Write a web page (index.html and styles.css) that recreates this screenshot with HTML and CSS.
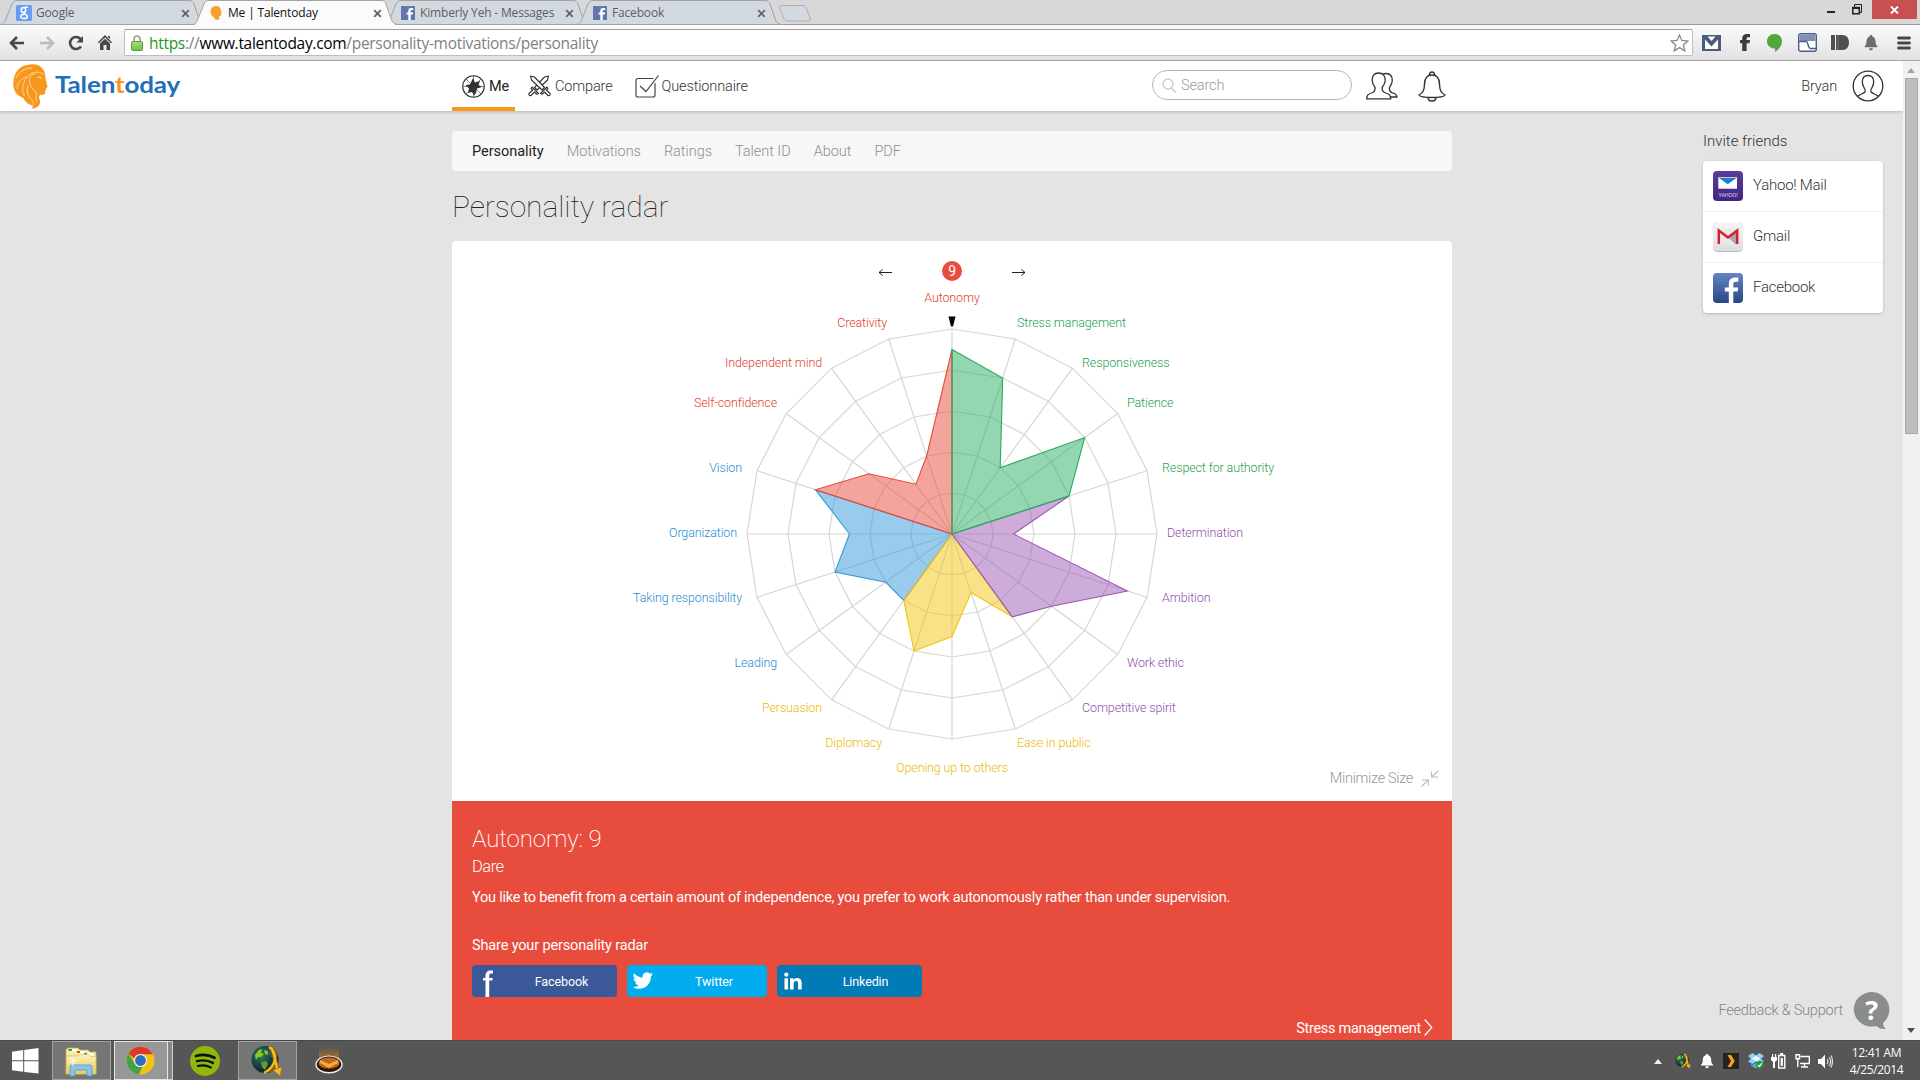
FILE: index.html
```html
<!DOCTYPE html>
<html lang="en">
<head>
<meta charset="utf-8">
<title>Me | Talentoday</title>
<link rel="stylesheet" href="styles.css">
</head>
<body>
<svg width="0" height="0" class="defs">
  <defs>
    <linearGradient id="folder" x1="0" y1="0" x2="0" y2="1"><stop offset="0" stop-color="#fdf3b8"/><stop offset="1" stop-color="#e3c766"/></linearGradient>
    <linearGradient id="fbgrad" x1="0" y1="0" x2="0" y2="1"><stop offset="0" stop-color="#6484c4"/><stop offset="1" stop-color="#274784"/></linearGradient>
    <linearGradient id="yahoograd" x1="0" y1="0" x2="0" y2="1"><stop offset="0" stop-color="#5c3c98"/><stop offset="1" stop-color="#432484"/></linearGradient>
    <linearGradient id="gmailgrad" x1="0" y1="0" x2="0" y2="1"><stop offset="0" stop-color="#f7f7f7"/><stop offset="1" stop-color="#dedede"/></linearGradient>
    <linearGradient id="lock" x1="0" y1="0" x2="0" y2="1"><stop offset="0" stop-color="#a6e07a"/><stop offset="1" stop-color="#6cbf4a"/></linearGradient>
    <linearGradient id="gold" x1="0" y1="0" x2="0" y2="1"><stop offset="0" stop-color="#b87318" stop-opacity="0"/><stop offset="1" stop-color="#c98126"/></linearGradient>
    <radialGradient id="earth" cx=".35" cy=".35" r=".7"><stop offset="0" stop-color="#2f7a62"/><stop offset=".6" stop-color="#163c46"/><stop offset="1" stop-color="#0b1c26"/></radialGradient>
    <symbol id="x" viewBox="0 0 9 9"><path d="M1.2 1.2L7.8 7.8M7.8 1.2L1.2 7.8" stroke="currentColor" stroke-width="1.9"/></symbol>
    <symbol id="tabshape" viewBox="0 0 206 25"><path d="M0 24.5C4 24 4.500 22.500 5.500 20L12 4C13 1.500 14 .5 17 .5H189C192 .5 193 1.500 194 4L199.500 20C200.500 22.500 202 24 206 24.500Z"/></symbol>
    <symbol id="fbfav" viewBox="0 0 14 14"><path fill="#6377ad" d="M0 0h14v14H0z"/><path fill="#fff" d="M7.300 14V8.600H5.600V6.400h1.700V5c0-2 1-3 2.900-3h2v2h-1.400c-.8 0-1.100.3-1.100 1.100v1.300h2.400l-.3 2.200H9.700V14z"/></symbol>
    <symbol id="lion" viewBox="0 0 36 45">
      <path fill="#f7981d" d="M17 .5C23 -.5 28 1.500 30.500 6c2 3 1.800 6 2 9l2.200 8-2 1.200.5 2-1.300 1 .3 2.500c-2 1.600-5 .2-6 2.300-.6 2.500 1.300 4.500.8 7-.5 2.800-3.500 5.300-7.600 5.800.3-1.500-.2-2.800-1-3.800-4-1-6.500-3.500-8-7C4 32 0 27 .3 19 .5 8 7 1 17 .5z"/>
      <g fill="none" stroke="#fff" stroke-width=".75" opacity=".75"><path d="M31 11c-3-2.500-6-3.500-10-2.500-6 1.500-8 5.500-10 10-2 5-2 9 .5 13.500M22 9.500c-4 1-6 3.500-5.500 8 .6 5 3 7 6 10.500 3 3.500-1 6 1 10"/><path d="M14 13C8 14 4 19 4 25M15 22c-2 6 0 10 4 14 2 2.500 1.500 4.500.5 7M3 14C6 8 12 4 19 4"/><path stroke-width="1.200" d="M24.500 13c2 0 3 .5 4 1.500"/></g>
    </symbol>
    <symbol id="globe" viewBox="0 0 32 32">
      <circle cx="14" cy="14.500" r="13.500" fill="url(#earth)"/>
      <path fill="#8ecc1c" d="M4 10l4-5 3-1-1 4 3 1-3 3-3 0-2 3zM13 5l4 1 0 4-3-1z"/>
      <path fill="#5f9f24" d="M10 17l5-1 2 3-3 6-3-3z"/>
      <path fill="#2e5a50" d="M16 4l6 3 2 7-6-3z"/>
      <path fill="none" stroke="#8a5d07" stroke-width="4" d="M19 2C27 8 26 21 17 27M20 2c4 8 5 17 6 22"/>
      <path fill="none" stroke="#f5ba22" stroke-width="2.400" d="M18 2C27 8 26 21 13 28M20 2c4 8 5 17 6 22"/>
      <path fill="#f5ba22" stroke="#a66e08" stroke-width=".6" d="M22 25l9-3-2 9z"/>
    </symbol>
    <symbol id="lb" viewBox="0 0 14 17"><path fill="currentColor" d="M7 0c1 0 1.500.6 1.500 1.500C11 2.300 11.700 4.500 11.800 7c.1 3 .7 4 2.200 5.200V13H0v-.8C1.500 11 2.100 10 2.200 7c.1-2.500.8-4.700 3.300-5.500C5.500.6 6 0 7 0zM5 14h4c0 1.300-.8 2.200-2 2.200S5 15.300 5 14z"/></symbol>
  </defs>
</svg>

<div class="tabstrip">
  <div class="tab tab-back"><svg class="tab-bg"><use href="#tabshape"/></svg>
    <svg class="fav" width="16" height="16" viewBox="0 0 16 16"><rect width="16" height="16" rx="1.500" fill="#6a9cf0"/><g fill="none" stroke="#fff" stroke-width="1.500"><ellipse cx="7.500" cy="4.900" rx="2.200" ry="2.500"/><path d="M8.500 2.300H12M8 7.500c-1 1.500 3.300 1.600 3.300 3.900 0 2.900-6.600 2.900-6.600.2 0-2 2.500-2.300 4-2.300"/></g></svg>
    <span class="tab-title">Google</span><svg class="tab-x"><use href="#x"/></svg></div>
  <div class="tab tab-active"><svg class="tab-bg"><use href="#tabshape"/></svg>
    <svg class="fav" width="16" height="16" viewBox="0 0 16 16"><path fill="#f7a12d" d="M7 1c4-.6 6 1.600 6 5l.7 2.500-.9.8V11H11l.5 3-2.500 1C7 15 7 13 5.500 12 3.500 11 2.500 9 2.600 6.600 2.700 3.500 4 1.500 7 1z"/></svg>
    <span class="tab-title">Me | Talentoday</span><svg class="tab-x"><use href="#x"/></svg></div>
  <div class="tab tab-back"><svg class="tab-bg"><use href="#tabshape"/></svg>
    <svg class="fav" width="14" height="14"><use href="#fbfav"/></svg>
    <span class="tab-title">Kimberly Yeh - Messages</span><svg class="tab-x"><use href="#x"/></svg></div>
  <div class="tab tab-back"><svg class="tab-bg"><use href="#tabshape"/></svg>
    <svg class="fav" width="14" height="14"><use href="#fbfav"/></svg>
    <span class="tab-title">Facebook</span><svg class="tab-x"><use href="#x"/></svg></div>
  <svg class="newtab" width="33" height="17" viewBox="0 0 33 17"><path d="M4 .5H25c1.500 0 2.500.5 3 2L32 13c.6 2-.2 3-2 3H9c-1.800 0-2.500-.7-3-2L1.500 3C1 1.500 2 .5 4 .5z" fill="#d3d9e0" stroke="#aeaeae"/></svg>
  <div class="winctl">
    <span class="win-min"></span>
    <svg width="11" height="11" viewBox="0 0 11 11"><path fill="none" stroke="#222" d="M2.500 3V.5h7v8H8"/><path fill="none" stroke="#222" stroke-width="1.500" d="M.8 3.500h6.500v6.300H.8z"/><path stroke="#222" d="M1 4.500h6"/></svg>
    <span class="win-close"><svg width="9" height="8" viewBox="0 0 9 8"><path d="M1 .5l7 7M8 .5l-7 7" stroke="#fff" stroke-width="1.800"/></svg></span>
  </div>
</div>

<div class="toolbar">
  <svg class="tb-back" width="16" height="14" viewBox="0 0 16 14"><path d="M15 7H2M8 1L2 7l6 6" fill="none" stroke="#484848" stroke-width="2.600"/></svg>
  <svg class="tb-fwd" width="16" height="14" viewBox="0 0 16 14"><path d="M1 7h13M8 1l6 6-6 6" fill="none" stroke="#bdbdbd" stroke-width="2.600"/></svg>
  <svg class="tb-reload" width="16" height="16" viewBox="0 0 16 16"><path d="M13 11.500A6 6 0 1 1 12.500 4" fill="none" stroke="#484848" stroke-width="2.600"/><path d="M15 1v6.500H8.500z" fill="#484848"/></svg>
  <svg class="tb-home" width="14" height="15" viewBox="0 0 14 15"><path fill="#484848" d="M7 0l7 7.200-1 1L7 2.500 1 8.200l-1-1zM10 1h2v3l-2-2zM2 8.500l5-4.700 5 4.700V15H8.500v-5h-3v5H2z"/></svg>
  <div class="omnibox">
    <svg width="12" height="16" viewBox="0 0 12 16"><path d="M3 7V4a3 3 0 0 1 6 0v3" fill="none" stroke="#9a9a9a" stroke-width="1.600"/><rect x=".5" y="6.500" width="11" height="9" rx="1" fill="url(#lock)" stroke="#579b3a"/></svg>
    <span class="url"><i class="u-s">https</i><i class="u-g">://</i>www.talentoday.com<i class="u-g">/personality-motivations/personality</i></span>
    <svg width="19" height="18" viewBox="0 0 19 18"><path d="M9.500 1l2.400 5.500 6 .5-4.600 3.900 1.500 6-5.300-3.300-5.300 3.300 1.500-6L1.100 7l6-.5z" fill="#fff" stroke="#8b8b8b" stroke-width="1.300"/></svg>
  </div>
  <div class="exts">
    <svg class="e-mail" width="19" height="16" viewBox="0 0 19 16"><path fill="#4c5c7c" d="M0 0h19v16H0z"/><path fill="#fff" d="M5.500 1.500h8L9.500 6zM3 4.500l6.500 7 6.500-7V14H3z"/></svg>
    <svg class="e-f" width="10" height="17" viewBox="0 0 10 17"><path fill="#3c3c3c" d="M2.200 17V9.200H0V6h2.200V4.700C2.200 1.500 4 0 6.800 0H10v3.200H8.200C7 3.200 6.600 3.700 6.600 4.800V6H10l-.5 3.200H6.600V17z"/></svg>
    <svg class="e-talk" width="15" height="18" viewBox="0 0 15 18"><path fill="#4fa83d" d="M7.500 0C11.800 0 15 3 15 7.200c0 4.300-3 8.300-7 10.800v-3.500C3.500 14.500 0 11.500 0 7.200 0 3 3.200 0 7.500 0z"/></svg>
    <svg class="e-cal" width="19" height="19" viewBox="0 0 19 19"><rect x=".7" y=".7" width="17.600" height="17.600" rx="2" fill="#fff" stroke="#4b5d84" stroke-width="1.400"/><path fill="#8090b8" d="M1.500 1.500h16V8h-16z"/><path d="M1 8.500h7.500c1.500 0 1 5.500 3.500 7h6" fill="none" stroke="#4b5d84" stroke-width="1.400"/></svg>
    <svg class="e-id" width="18" height="15" viewBox="0 0 18 15"><path fill="#4f4f4f" d="M0 0h4v15H0zM5 0h6.500c4 0 6.500 3 6.500 7.500S15.500 15 11.500 15H5z"/><path stroke="#707070" d="M7 0v15"/></svg>
    <svg class="e-bell" width="14" height="16" viewBox="0 0 14 17" color="#6d6d6d"><use href="#lb"/></svg>
    <svg class="e-menu" width="14" height="14" viewBox="0 0 14 14"><path d="M1.500 2h11M1.500 7h11M1.500 12h11" stroke="#484848" stroke-width="2.800" stroke-linecap="round"/></svg>
  </div>
</div>

<div class="viewport">
  <div class="page">
    <header class="header">
      <div class="brand">
        <svg width="36" height="45"><use href="#lion"/></svg>
        <svg class="wordmark" width="130" height="34"><text x="0" y="24" textLength="125" lengthAdjust="spacingAndGlyphs">Talen<tspan class="t">t</tspan>oday</text></svg>
      </div>
      <nav class="topnav">
        <a class="on"><svg width="23" height="23" viewBox="0 0 23 23"><g fill="none" stroke="#333"><circle cx="11.500" cy="11.500" r="10.800" stroke-width="1.100"/><path stroke-width=".6" d="M11.500 1v21M1 11.500h21M4 4l15 15M19 4L4 19"/></g><path fill="#333" d="M11 3l2 4.500L18 6l-1.500 4 3.500 2-5 1.500-1 4.500-2 2.500L10 17l-4 1 1-4.500L3.500 10l4.500-.5z"/></svg>Me</a>
        <a><svg width="23" height="22" viewBox="0 0 23 22"><g fill="#fff" stroke="#333" stroke-width="1.100" stroke-linejoin="round"><path d="M20.500 1l-4 1L6.500 12.500 9 15 19.500 5z"/><path d="M4 12l6.500 6.500-1.700.8L6.500 17 3 20.500a1.500 1.500 0 0 1-2-2L4.700 15 3 13.500z"/><path d="M2.500 1l4 1L16.500 12.500 14 15 3.500 5z"/><path d="M19 12l-6.500 6.500 1.700.8 2.300-2.300 3.500 3.500a1.500 1.500 0 0 0 2-2L18.300 15l1.700-1.500z"/></g></svg>Compare</a>
        <a><svg width="24" height="23" viewBox="0 0 24 23"><g fill="none" stroke="#444" stroke-width="1.200"><path d="M18.500 3.500H3a2 2 0 0 0-2 2V20a2 2 0 0 0 2 2h15a2 2 0 0 0 2-2V8"/><path d="M5 11l6 5.500L23.500.5"/></g></svg>Questionnaire</a>
      </nav>
      <div class="search"><svg width="15" height="15" viewBox="0 0 15 15"><circle cx="6" cy="6" r="5" fill="none" stroke="#ccc" stroke-width="1.300"/><path d="M9.500 10l4.500 4.500" stroke="#ccc" stroke-width="1.500"/></svg>Search</div>
      <svg class="h-people" width="32" height="28" viewBox="0 0 32 28"><g fill="#fff" stroke="#333" stroke-width="1.300"><path d="M15 4c1-2 3-2.500 5-2.500 4.500 0 6.500 3 6.300 7-.1 3-1.500 5-2.800 7-.4 3 .5 4.500 3 5.300 3 .7 4.200 1.500 4.500 4.200h-8"/><path d="M12.500 1C8 1 6 4 6.200 8.500c.2 3 1.300 5 2.800 7 .4 3-.5 4.500-3.500 5.500C2 22 1 23 .7 26.800h24c-.3-3.800-1.500-4.800-5-5.800-3-1-3.900-2.500-3.500-5.500 1.500-2 2.800-4 3-7C19.400 4 17 1 12.500 1z"/></g></svg>
      <svg class="h-bell" width="28" height="31" viewBox="0 0 28 31"><g fill="#fff" stroke="#333" stroke-width="1.400"><path d="M10 26.500c0 2.300 1.700 3.500 4 3.500s4-1.200 4-3.500M11.500 4c0-2 .8-3 2.500-3s2.500 1 2.500 3"/><path d="M14 4c-5 0-7.300 3.500-7.500 9-.2 6-1 8.500-5.500 11 1 2 7 2.500 13 2.500S26 26 27 24c-4.500-2.500-5.300-5-5.500-11-.2-5.500-2.500-9-7.500-9z"/></g></svg>
      <span class="user">Bryan</span>
      <svg class="h-avatar" width="32" height="32" viewBox="0 0 32 32"><g fill="none" stroke="#333" stroke-width="1.300"><circle cx="16" cy="16" r="14.800"/><path d="M5.500 26.500c2-2.500 6-2.500 7.500-4.500.7-1.500 0-3-1-4.500-1-1.500-1.800-3.500-1.700-6C10.500 7.500 12.500 5.500 16 5.500s5.500 2 5.700 6c.1 2.500-.7 4.500-1.700 6s-1.700 3-1 4.500c1.500 2 5.500 2 7.500 4.500"/></g></svg>
    </header>

    <div class="content">
      <main class="main">
        <nav class="subnav"><a class="on">Personality</a><a>Motivations</a><a>Ratings</a><a>Talent ID</a><a>About</a><a>PDF</a></nav>
        <h1>Personality radar</h1>
        <section class="radar-card">
          <svg id="radar" width="1000" height="560" viewBox="452 241 1000 560"></svg>
          <div class="minimize"><span>Minimize Size</span><svg width="18" height="17" viewBox="0 0 18 17"><path fill="none" stroke="#bbb" stroke-width="1.100" d="M17.500.5l-7 6.500M10.500 1.500V7H17M.5 16.500l7-6.500M1 10h6.500v5.500"/></svg></div>
        </section>
        <section class="detail">
          <h2>Autonomy: 9</h2>
          <h3>Dare</h3>
          <p class="desc">You like to benefit from a certain amount of independence, you prefer to work autonomously rather than under supervision.</p>
          <p class="share-title">Share your personality radar</p>
          <div class="share">
            <a class="fb"><svg width="30" height="32" viewBox="0 0 30 32"><path fill="#fff" d="M13.500 32V15.500H11V13h2.500v-2C13.500 7.500 15.500 5.500 18.500 5.500H21v3h-1.500c-1.800 0-2.300.7-2.300 2.300V13h3.600l-.4 2.500h-3.200V32z"/></svg><span>Facebook</span></a>
            <a class="tw"><svg width="30" height="32" viewBox="0 0 30 32"><path transform="translate(5.800 5.500) scale(.84)" fill="#fff" d="M23.950 4.570a10 10 0 0 1-2.820.78 4.960 4.960 0 0 0 2.160-2.730c-.95.560-2 .96-3.130 1.190a4.920 4.920 0 0 0-8.380 4.480C7.690 8.090 4.070 6.130 1.640 3.160a4.920 4.920 0 0 0 1.520 6.570 4.900 4.900 0 0 1-2.230-.610v.06c0 2.380 1.700 4.370 3.950 4.820a5 5 0 0 1-2.210.09 4.940 4.940 0 0 0 4.600 3.420A9.870 9.870 0 0 1 0 19.540a14 14 0 0 0 7.550 2.210c9.050 0 14-7.500 14-13.980l-.02-.64a9.900 9.900 0 0 0 2.420-2.560z"/></svg><span>Twitter</span></a>
            <a class="li"><svg width="30" height="32" viewBox="0 0 30 32"><g fill="#fff"><circle cx="9.300" cy="9.700" r="2.100"/><path d="M7.500 13.300h3.600v11.200H7.500zM13 13.300h3.400v1.600c.7-1.200 2-1.900 3.600-1.900 3.600 0 4.700 2.200 4.700 5.600v5.900h-3.600v-5.400c0-1.700-.3-3-2-3s-2.500 1.200-2.500 3v5.400H13z"/></g></svg><span>Linkedin</span></a>
          </div>
          <a class="next"><span>Stress management</span><svg width="9" height="17" viewBox="0 0 9 17"><path d="M.7.5L7.800 8.500.7 16.500" fill="none" stroke="#fff" stroke-width="1.200"/></svg></a>
        </section>
      </main>
      <aside class="side">
        <h4>Invite friends</h4>
        <div class="invite">
          <a><svg width="30" height="30" viewBox="0 0 30 30"><rect width="30" height="30" rx="4" fill="url(#yahoograd)"/><path fill="#fff" d="M5.300 6.300H24v11.400H5.300z"/><path fill="#1a82c8" d="M6 7h17.500l-8.700 6.300z"/><text x="5.500" y="26.200" class="yh" textLength="19" lengthAdjust="spacingAndGlyphs">YAHOO!</text></svg><span>Yahoo! Mail</span></a>
          <a><svg width="30" height="30" viewBox="0 0 30 30"><rect width="30" height="30" rx="4.500" fill="#bbb"/><rect width="30" height="29" rx="4.500" fill="url(#gmailgrad)"/><path fill="#e9e9e9" d="M5 7h20v15H5z"/><path fill="#a5a9ab" d="M15 15l10-8v15h-3z"/><path d="M5.800 22V8.500L15 15.500l9.200-7V22" fill="none" stroke="#d9202a" stroke-width="2.500"/></svg><span>Gmail</span></a>
          <a><svg width="30" height="30" viewBox="0 0 30 30"><rect width="30" height="30" rx="4" fill="url(#fbgrad)"/><path fill="#fff" d="M15.800 30V18.600h-4v-4.200h4v-3.200c0-4.500 2.400-6.700 6.300-6.700h3.200v4.200h-2.400c-2 0-2.600.9-2.600 2.700v3h4.900l-.6 4.200h-4.300V30z"/></svg><span>Facebook</span></a>
        </div>
      </aside>
    </div>
    <div class="feedback"><span>Feedback &amp; Support</span><svg width="38" height="38" viewBox="0 0 38 38"><path fill="#8b8c8c" d="M18.500 0a18 17.300 0 1 0 5 34c2 2 5.500 3.800 9.500 2.800-2-1-3-3-2.800-6A17.500 17.500 0 0 0 18.500 0z"/><text x="18.600" y="27.500" text-anchor="middle" class="qm">?</text></svg></div>
  </div>
  <div class="scrollbar"><i class="sb-up"></i><i class="sb-thumb"></i><i class="sb-down"></i></div>
</div>

<div class="taskbar">
  <div class="tk-start"><svg width="27" height="26" viewBox="0 0 27 26"><path fill="#fff" d="M0 3.700l11.200-1.600V12.300H0zM12.200 2L26.500 0v12.300H12.200zM0 13.300h11.200V23.800L0 22.200zM12.200 13.300h14.300V25.500L12.200 24z"/></svg></div>
  <div class="tk-btn tk-explorer"><svg width="34" height="32" viewBox="0 0 34 32"><path fill="url(#folder)" stroke="#c9a94c" stroke-width=".7" d="M2 29V4.500L4 3h10l2 2h8l2 2h6v22z"/><path fill="#fff" d="M6 4h6v2.500H6zM14 6h7v2.500h-7zM22 8h7v2.500h-7z"/><path fill="#1eae38" d="M4.500 4H8v2H4.500z"/><path fill="#d24a28" d="M13 6h3v2h-3z"/><path fill="#2b83d6" d="M20 8h3v2h-3z"/><path fill="url(#folder)" stroke="#d7bc62" stroke-width=".6" d="M2.500 11H14l2-1.500h9l2 2h5V29h-30z"/><path fill="#8cc4e4" stroke="#4d9cc8" stroke-width=".8" d="M6 31V22c0-1.500 1-2 2-2h18c1.500 0 2 .8 2 2v9h-5v-6H11v6z"/><path stroke="#fff" stroke-width=".9" d="M5 18l8-3M9 12v9M6 13l6 6"/></svg></div>
  <div class="tk-btn tk-chrome"><svg width="29" height="29" viewBox="0 0 30 30"><circle cx="15" cy="15" r="14.500" fill="#f4c20d"/><path fill="#d93a2f" d="M2.500 7.700A14.500 14.500 0 0 1 27.800 8.500H15a6.500 6.500 0 0 0-6.200 4.500z"/><path fill="#45a14c" d="M2.500 7.700L9.300 18.500a6.500 6.500 0 0 0 7.700 2.700L13.300 29.400A14.500 14.500 0 0 1 2.500 7.700z"/><circle cx="15" cy="15" r="6.800" fill="#f1f1f1"/><circle cx="15" cy="15" r="5.600" fill="#2f6fbe"/></svg></div>
  <div class="tk-stack"></div>
  <div class="tk-icon tk-spotify"><svg width="30" height="30" viewBox="0 0 30 30"><circle cx="15" cy="15" r="15" fill="#8fb70c"/><g fill="none" stroke="#111" stroke-linecap="round"><path stroke-width="2.800" d="M6 10c6-1.800 13-1.300 18.500 1.800"/><path stroke-width="2.400" d="M7 15.200c5.500-1.500 11-1 16 1.700"/><path stroke-width="2" d="M7.800 20c4.700-1.200 9-.7 13.200 1.500"/></g></svg></div>
  <div class="tk-btn tk-globe"><svg width="32" height="32"><use href="#globe"/></svg></div>
  <div class="tk-icon tk-disc"><svg width="28" height="27" viewBox="0 0 28 27"><path fill="url(#gold)" d="M4 0h20v12H4z" opacity=".7"/><ellipse cx="14" cy="17.500" rx="13" ry="8.300" fill="#2b1605" stroke="#eee" stroke-width="1.400"/><ellipse cx="14" cy="16" rx="11" ry="6" fill="#b9691c" stroke="#40230a"/><path fill="#f7a944" d="M5 13l9 4 9-4v3l-9 5-9-5z"/></svg></div>
  <div class="tray">
    <svg class="y-up" width="8" height="5" viewBox="0 0 8 5"><path fill="#eef" d="M4 0l4 5H0z"/></svg>
    <svg class="y-globe" width="16" height="16"><use href="#globe"/></svg>
    <svg class="y-bell" width="14" height="15" viewBox="0 0 14 17" color="#fff"><use href="#lb"/></svg>
    <svg class="y-plex" width="16" height="16" viewBox="0 0 16 16"><path fill="#252220" d="M0 0h16v16H0z"/><path fill="#f9a11b" d="M4.500 2H8l3.800 6L8 14H4.500l3.500-6z"/></svg>
    <svg class="y-drop" width="16" height="16" viewBox="0 0 16 16"><path fill="#8fd0fb" d="M4.500 0L8 2.500 11.500 0 16 3l-3 2.700L16 8.500 11.500 11 8 8.500 4.500 11 0 8.500l3-2.800L0 3z"/><path fill="#e8f6ff" d="M8 2.800l4.500 2.900L8 8.300 3.500 5.700z"/><path fill="#5aa9e6" d="M3 11l1.500 1L8 9.500l3.500 2.500 1.500-1v1.500L8 15.500l-5-3z"/><circle cx="11.800" cy="11.800" r="3.800" fill="#22983a"/><path d="M10 12l1.500 1.500 2.300-3.500" stroke="#fff" fill="none" stroke-width="1.200"/></svg>
    <svg class="y-bat" width="15" height="16" viewBox="0 0 15 16"><path fill="none" stroke="#fff" stroke-width="1.400" d="M7.700 2.500h6.100v12.500H7.700z"/><path fill="#fff" d="M9.200 0h3v2h-3zM9.700 5h2.200v8H9.700zM1 1h1.200v3H1zM4 1h1.200v3H4zM0 4h6v3L4 9v6H2V9L0 7z"/></svg>
    <svg class="y-net" width="15" height="14" viewBox="0 0 15 14"><path fill="none" stroke="#fff" stroke-width="1.400" d="M5.500 2.500h8.800v7H5M9.500 9.500V13M6 13h7M1 .7h3.500v4H1zM2.800 5v8"/></svg>
    <svg class="y-snd" width="15" height="15" viewBox="0 0 15 15"><path fill="#fff" d="M0 5h3l4-4.500v14L3 10H0z"/><path fill="none" stroke="#ddd" stroke-width="1.200" d="M9 5c1.200 1.500 1.200 3.500 0 5M11 3c2 2.700 2 6.300 0 9M13 1.500c2 4 2 8 0 12"/></svg>
    <div class="clock"><span>12:41 AM</span><span>4/25/2014</span></div>
  </div>
</div>
<script src="radar.js"></script>
</body>
</html>
```
FILE: styles.css
```css
* { box-sizing: border-box; }
body {
  margin: 0;
  width: 1920px;
  height: 1080px;
  overflow: hidden;
  display: flex;
  flex-direction: column;
  font-family: Roboto, "Open Sans", sans-serif;
  font-weight: 300;
  color: #333;
}
svg { display: block; flex: none; }
.defs { position: absolute; }
i { font-style: normal; }

/* Browser tabs */
.tabstrip {
  height: 25px;
  background: #d8d8d8;
  border-bottom: 1px solid #9a9a9a;
  display: flex;
  font: 400 12px "Open Sans", sans-serif;
}
.tab {
  position: relative;
  width: 206px;
  height: 25px;
  margin-right: -14px;
  padding: 1px 0 0 16px;
  display: flex;
  align-items: center;
  color: #5d5d5d;
}
.tab-bg { position: absolute; left: 0; top: 0; width: 206px; height: 25px; fill: #d3d9e0; stroke: #a3a3a3; }
.tab-active { z-index: 1; color: #111; }
.tab-active .tab-bg { fill: #fbfbfb; }
.tab-active::after { content: ""; position: absolute; left: 3px; right: 3px; bottom: 0; height: 1px; background: #fbfbfb; }
.fav, .tab-title, .tab-x { position: relative; }
.tab-title { width: 145px; margin-left: 4px; letter-spacing: -0.17px; white-space: nowrap; line-height: 16px; }
.fav[width="14"] { margin: 0 1px; }
.tab-x { width: 9px; height: 9px; color: #666; }
.newtab { margin: 5px 0 0 10px; }
.winctl { margin-left: auto; display: flex; height: 19px; align-items: center; padding-right: 3px; }
.win-min { width: 8px; height: 2px; background: #222; margin: 5px 17px 0 0; }
.win-close { margin-left: 9px; width: 45px; height: 19px; background: #c75050; display: flex; align-items: center; justify-content: center; }

/* Browser toolbar */
.toolbar {
  height: 36px;
  display: flex;
  align-items: center;
  padding-left: 9px;
  background: linear-gradient(#fbfbfb, #e2e2e2);
  border-bottom: 1px solid #a5a5a5;
}
.tb-fwd { margin-left: 14px; }
.tb-reload { margin-left: 13px; }
.tb-home { margin-left: 14px; }
.omnibox {
  width: 1569px;
  height: 27px;
  margin-left: 12px;
  padding: 0 3px 0 6px;
  display: flex;
  align-items: center;
  background: #fff;
  border: 1px solid #bdbdbd;
  border-top-color: #a0a0a0;
  border-radius: 2px;
}
.url { flex: 1; margin-left: 6px; font: 400 15.500px/22px "Open Sans", sans-serif; letter-spacing: -0.3px; color: #000; }
.u-s { color: #1a9a1a; }
.u-g { color: #808080; }
.exts { display: flex; align-items: center; margin-left: 9px; }
.e-f { margin-left: 19px; }
.e-talk { margin-left: 17px; }
.e-cal { margin-left: 16px; }
.e-id { margin-left: 14px; }
.e-bell { margin-left: 15px; }
.e-menu { margin-left: 19px; }

/* Page frame */
.viewport { flex: 1; min-height: 0; display: flex; }
.page { position: relative; width: 1903px; background: #e4e4e4; overflow: hidden; }
.scrollbar { width: 17px; background: #f1f1f1; display: flex; flex-direction: column; align-items: center; padding-right: 1px; }
.sb-up { margin-top: 7px; border: 4px solid transparent; border-top: 0; border-bottom: 5px solid #a3a3a3; }
.sb-thumb { margin-top: 5px; width: 13px; height: 356px; background: #bcbcbc; border: 1px solid #a8a8a8; }
.sb-down { margin: auto 0 7px; border: 4px solid transparent; border-bottom: 0; border-top: 5px solid #505050; }

.header {
  position: relative;
  height: 50px;
  background: #fff;
  box-shadow: 0 1px 3px rgba(0, 0, 0, .2);
  display: flex;
  align-items: center;
  font-size: 14.500px;
  letter-spacing: -0.13px;
}
.brand { width: 439px; padding-left: 13px; display: flex; align-items: center; }
.wordmark { margin: 0 0 0 6px; }
.wordmark text { font: 700 23.500px Lato, sans-serif; fill: #1f70b8; }
.wordmark .t { fill: #f7981d; }
.topnav { width: 713px; height: 50px; display: flex; margin-left: 13px; margin-right: -13px; }
.topnav a { display: flex; align-items: center; gap: 4px; margin-right: 13px; border-bottom: 4px solid transparent; padding-top: 4px; }
.topnav a.on { width: 63px; padding-left: 10px; border-color: #f7981d; color: #222; font-weight: 400; }
.topnav a:last-child { margin-left: 9px; gap: 3px; }
.search {
  width: 200px;
  height: 30px;
  margin-top: -2px;
  border: 1px solid #b4b4c8;
  border-radius: 15px;
  display: flex;
  align-items: center;
  gap: 4px;
  padding-left: 9px;
  color: #999;
}
.h-people { margin-left: 14px; }
.h-bell { margin-left: 20px; }
.user { margin-left: auto; }
.h-avatar { margin: 0 19px 0 15px; }

.content { display: flex; padding: 20px 20px 0 452px; justify-content: space-between; align-items: flex-start; }
.main { width: 1000px; }
.subnav {
  height: 40px;
  border-radius: 4px;
  background: #f7f7f7;
  display: flex;
  align-items: center;
  gap: 23px;
  padding: 0 20px;
  font-size: 14.500px;
  letter-spacing: -0.03px;
  color: #8f8f8f;
}
.subnav .on { color: #222; font-weight: 400; }
h1 { margin: 0; height: 70px; line-height: 72px; font-size: 30px; font-weight: 100; letter-spacing: -0.07px; color: #222; }
.radar-card { position: relative; height: 560px; background: #fff; border-radius: 4px 4px 0 0; }
#radar text { font-size: 12.500px; letter-spacing: -0.12px; }
#radar .badge { font-size: 14px; font-weight: 400; }
.minimize { position: absolute; right: 13px; bottom: 13px; display: flex; align-items: center; gap: 8px; font-size: 14.500px; letter-spacing: -0.33px; line-height: 18px; color: #999; }
.minimize span { padding-top: 2px; }

.detail { height: 239px; padding: 20px 19px 0 20px; background: #e84c3d; color: #fff; }
.detail h2 { margin: 0; font-size: 24px; line-height: 36px; font-weight: 200; letter-spacing: -0.15px; }
.detail h3 { margin: 0; font-size: 16.500px; line-height: 19px; font-weight: 300; letter-spacing: -0.5px; }
.detail p { margin: 0; font-size: 14.500px; font-weight: 400; line-height: 18px; letter-spacing: -0.24px; }
.detail .desc { margin-top: 13px; }
.detail .share-title { margin-top: 30px; letter-spacing: -0.15px; }
.share { display: flex; gap: 10px; margin-top: 10px; }
.share a { height: 32px; border-radius: 4px; display: flex; align-items: center; font-size: 12.500px; letter-spacing: -0.1px; font-weight: 400; }
.share span { flex: 1; text-align: center; padding-left: 4px; }
.fb { width: 145px; background: #3b5998; }
.tw { width: 140px; background: #00aced; }
.li { width: 145px; background: #007bb6; }
.li span { padding-left: 2px; }
.next { display: flex; justify-content: flex-end; align-items: center; gap: 3px; margin-top: 22px; font-size: 14.500px; line-height: 17px; letter-spacing: -0.3px; font-weight: 400; }
.next span { margin: 1px 0 -1px; }

.side { width: 180px; font-size: 15px; }
.side h4 { margin: 1px 0 10px; font-size: 15px; line-height: 19px; font-weight: 300; }
.invite { background: #fff; border-radius: 4px; box-shadow: 0 1px 3px rgba(0, 0, 0, .2); letter-spacing: -0.25px; }
.invite a { height: 51px; padding-left: 10px; display: flex; align-items: center; gap: 10px; border-bottom: 1px solid #f0f0f0; }
.invite span { padding-bottom: 3px; }
.invite a:last-child { border: 0; height: 50px; }
.yh { font: 600 5.500px "Open Sans", sans-serif; fill: #c8bbe0; }
.feedback { position: absolute; right: 12px; bottom: 10px; display: flex; align-items: center; gap: 10px; font-size: 14.500px; letter-spacing: -0.2px; color: #858585; }
.feedback span { padding-bottom: 1px; }
.qm { font: 700 27px "Open Sans", sans-serif; fill: #fff; }

/* Windows taskbar */
.taskbar { height: 40px; background: #565656; border-top: 1px solid #484848; display: flex; align-items: center; }
.tk-start { width: 52px; padding-left: 12px; }
.tk-btn { height: 39px; display: flex; align-items: center; justify-content: center; border: 1px solid #a2a2a2; background: #757575; }
.tk-explorer { width: 59px; padding-right: 2px; }
.tk-chrome { width: 54px; margin-left: 3px; padding-right: 2px; border-color: #e6e6e6; background: #979797; }
.tk-stack { width: 5px; height: 39px; border: 1px solid #d0d0d0; border-left: 0; background: #888; }
.tk-spotify { margin-left: 17px; }
.tk-globe { width: 59px; margin-left: 18px; padding-right: 2px; }
.tk-disc { margin-left: 18px; }
.tray { margin-left: auto; display: flex; align-items: center; color: #fff; padding-top: 1px; }
.y-globe { margin-left: 13px; }
.y-bell { margin-left: 9px; }
.y-plex { margin-left: 9px; }
.y-drop { margin-left: 9px; }
.y-bat { margin-left: 7px; }
.y-net { margin-left: 9px; }
.y-snd { margin-left: 8px; }
.clock { width: 87px; display: flex; flex-direction: column; align-items: center; font: 400 12px/17px "Open Sans", sans-serif; letter-spacing: -0.35px; }
```
FILE: radar.js
```js
const CX = 952, CY = 534, UNIT = 20.5;
const C = { red: '#e74c3c', green: '#27ae60', purple: '#9b59b6', yellow: '#f1c40f', blue: '#3498db' };
const TEXT = { red: '#e2402f', green: '#1fa055', purple: '#9150ad', yellow: '#ecb90a', blue: '#2a8ed2' };

// [label, value, colour, x, y, anchor], clockwise from the top
const traits = [
  ['Autonomy', 9, 'red', 952, 297.5, 'middle'],
  ['Stress management', 8, 'green', 1017, 322.5, 'start'],
  ['Responsiveness', 4, 'green', 1082, 362.5, 'start'],
  ['Patience', 8, 'green', 1127, 402.5, 'start'],
  ['Respect for authority', 6, 'green', 1162, 467.5, 'start'],
  ['Determination', 3, 'purple', 1167, 532.5, 'start'],
  ['Ambition', 9, 'purple', 1162, 597.5, 'start'],
  ['Work ethic', 6, 'purple', 1127, 662.5, 'start'],
  ['Competitive spirit', 5, 'purple', 1082, 707.5, 'start'],
  ['Ease in public', 3, 'yellow', 1017, 742.5, 'start'],
  ['Opening up to others', 5, 'yellow', 952, 767.5, 'middle'],
  ['Diplomacy', 6, 'yellow', 882, 742.5, 'end'],
  ['Persuasion', 4, 'yellow', 822, 707.5, 'end'],
  ['Leading', 4, 'blue', 777, 662.5, 'end'],
  ['Taking responsibility', 6, 'blue', 742, 597.5, 'end'],
  ['Organization', 5, 'blue', 737, 532.5, 'end'],
  ['Vision', 7, 'blue', 742, 467.5, 'end'],
  ['Self-confidence', 5, 'red', 777, 402.5, 'end'],
  ['Independent mind', 3, 'red', 822, 362.5, 'end'],
  ['Creativity', 4, 'red', 887, 322.5, 'end']
];
const sectors = [['blue', 12], ['yellow', 8], ['purple', 4], ['red', 16], ['green', 0]];

const pt = (i, v) => {
  const a = i * Math.PI / 10;
  return (CX + Math.sin(a) * v * UNIT).toFixed(1) + ',' + (CY - Math.cos(a) * v * UNIT).toFixed(1);
};
let out = '<g fill="none" stroke="#d6d6d6" stroke-width="1.2">';
for (let r = 2; r <= 10; r += 2) {
  out += `<polygon points="${traits.map((_, i) => pt(i, r)).join(' ')}"/>`;
}
traits.forEach((_, i) => { out += `<path d="M${CX},${CY}L${pt(i, 10)}"/>`; });
out += '</g>';
for (const [name, start] of sectors) {
  const pts = [`${CX},${CY}`];
  for (let k = 0; k <= 4; k++) {
    const i = (start + k) % 20;
    pts.push(pt(i, traits[i][1]));
  }
  out += `<polygon points="${pts.join(' ')}" fill="${C[name]}" fill-opacity=".5" stroke="${C[name]}" stroke-width="1.1"/>`;
}
for (const [label, , colour, x, y, anchor] of traits) {
  out += `<text x="${x}" y="${y + 4}" text-anchor="${anchor}" fill="${TEXT[colour]}">${label}</text>`;
}
out += '<path d="M948.500 316.500H955.500L953 326.500H951z"/>';
out += '<circle cx="952" cy="271" r="10" fill="#e84c3d"/><text class="badge" x="952" y="276" text-anchor="middle" fill="#fff">9</text>';
out += '<g fill="none" stroke="#222"><path d="M892 272.500H879M882.500 269.500L879 272.500 882.500 275.500M1012 272.500h13M1021.500 269.500l3.500 3-3.500 3"/></g>';
document.getElementById('radar').innerHTML = out;
```
